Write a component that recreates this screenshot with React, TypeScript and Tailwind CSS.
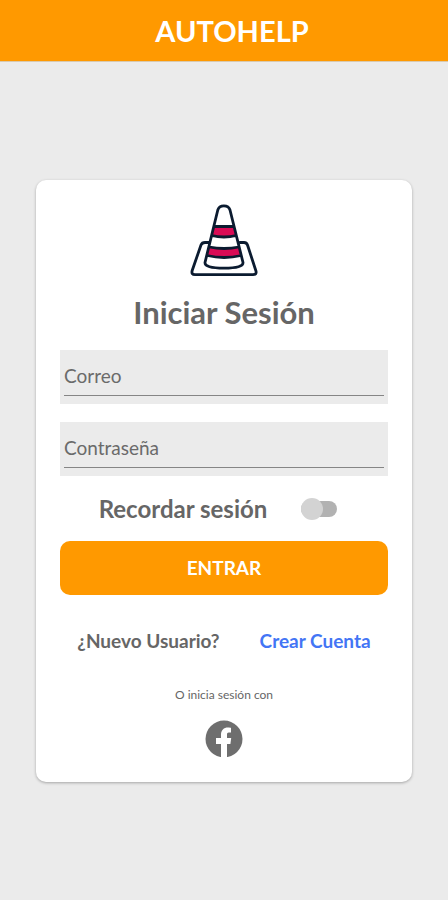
import { useState } from 'react';

function ConeLogo() {
  return (
    <svg width="70" height="75" viewBox="9 8 70 75" fill="none" aria-hidden="true">
      {/* Base plate */}
      <path
        d="M29 47.5H25Q22 47.5 21 50L12.2 75.5Q11 79.7 15 79.7H73Q77.2 79.7 75.8 75.5L67.5 50Q66.6 47.5 64 47.5H60"
        stroke="#0B1B30"
        strokeWidth="2.8"
        strokeLinecap="round"
        strokeLinejoin="round"
      />
      {/* Stripes */}
      <path d="M33.8 31.5H54L56.2 40.5Q44 43.5 31.6 40.5Z" fill="#D90B55" />
      <path d="M29.2 52Q44 55 59 52L61.2 60.5Q44 64.5 27.2 60.5Z" fill="#D90B55" />
      {/* Cone body */}
      <path
        d="M37.8 15Q39 10.8 43.9 10.8Q48.8 10.8 50 15L63 67.5Q63.5 73.2 44 73.2Q24.5 73.2 25 67.5ZM33.8 31.5H54M31.6 40.5Q44 43.5 56.2 40.5M29.2 52Q44 55 59 52M27.2 60.5Q44 64.5 61.2 60.5"
        stroke="#0B1B30"
        strokeWidth="2.8"
        strokeLinejoin="round"
      />
    </svg>
  );
}

function FacebookIcon() {
  return (
    <svg width="38" height="38" viewBox="0 0 38 38" aria-hidden="true">
      <circle cx="19" cy="19" r="18.5" fill="#6E6E6E" />
      <path
        d="M16 38V24H11V18H16V14.6C16 10 18.8 7.4 23 7.4C24.5 7.4 26 7.7 26 7.7V12.6H23.8C22.2 12.6 22 13.6 22 14.8V18H26.2L25.4 24H22V38Z"
        fill="white"
      />
    </svg>
  );
}

function Field({ id, label, type }: { id: string; label: string; type: string }) {
  return (
    <div className="grid bg-[#EBEBEB] px-1 pb-2">
      <input
        id={id}
        type={type}
        placeholder=" "
        className="peer col-start-1 row-start-1 h-[46px] w-full border-b border-[#858585] bg-transparent pt-1 text-[19px] text-[#606060] outline-none"
      />
      <label
        htmlFor={id}
        className="invisible col-start-1 row-start-1 self-end pb-[6px] text-[19px] leading-7 text-[#6A6A6A] peer-placeholder-shown:visible"
      >
        {label}
      </label>
    </div>
  );
}

export default function App() {
  const [remember, setRemember] = useState(false);

  return (
    <div className="min-h-screen bg-[#EBEBEB] pb-8 font-['Lato',sans-serif] text-[#666666]">
      {/* Top bar */}
      <header className="flex h-[62px] items-center justify-center border-b border-[#D9C9AE] bg-[#FF9900] pl-4">
        <h1 className="text-[29px] font-bold text-white">AUTOHELP</h1>
      </header>

      {/* Login card */}
      <main className="mx-9 mt-[118px] rounded-[10px] bg-white px-6 pt-[23px] pb-6 shadow-[0_1px_3px_rgba(0,0,0,0.3)]">
        <form onSubmit={(e) => e.preventDefault()}>
          <div className="flex flex-col items-center">
            <ConeLogo />
            <h2 className="mt-4 text-[31px] leading-9 font-bold">Iniciar Sesión</h2>
          </div>

          <div className="mt-5 space-y-[18px]">
            <Field id="correo" label="Correo" type="email" />
            <Field id="contrasena" label="Contraseña" type="password" />
          </div>

          <label className="flex h-[65px] items-center justify-center gap-[34px] pr-3 text-[24px] font-bold">
            Recordar sesión
            <span className="relative flex h-6 w-9 items-center">
              <input
                type="checkbox"
                role="switch"
                checked={remember}
                onChange={(e) => setRemember(e.target.checked)}
                className="peer h-4 w-full appearance-none rounded-full bg-[#B2B2B2] checked:bg-[#FFCC80]"
              />
              <span className="pointer-events-none absolute left-0 size-[22px] rounded-full bg-[#D3D3D3] peer-checked:left-4 peer-checked:bg-[#FF9900]" />
            </span>
          </label>

          <button type="submit" className="h-[54px] w-full rounded-[10px] bg-[#FF9900] text-[19px] font-bold text-white">
            ENTRAR
          </button>

          <div className="mt-8 flex items-center justify-center gap-10 text-[19px] leading-7 font-bold">
            <span>¿Nuevo Usuario?</span>
            <a href="#crear-cuenta" className="text-[#4375F5]">
              Crear Cuenta
            </a>
          </div>

          <div className="mt-8 flex flex-col items-center gap-[17px]">
            <p className="text-[12px] leading-4">O inicia sesión con</p>
            <button type="button" aria-label="Facebook">
              <FacebookIcon />
            </button>
          </div>
        </form>
      </main>
    </div>
  );
}
